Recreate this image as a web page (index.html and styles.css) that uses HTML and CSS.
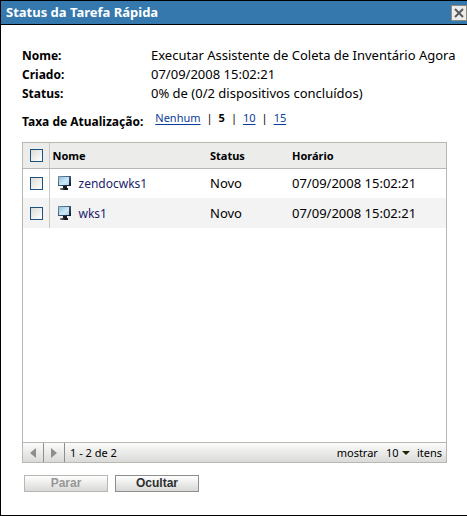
FILE: index.html
```html
<!DOCTYPE html>
<html lang="pt-BR">
<head>
    <meta charset="UTF-8">
    <meta name="viewport" content="width=device-width, initial-scale=1.0">
    <title>Status da Tarefa Rápida</title>
    <link rel="stylesheet" href="styles.css">
</head>
<body>
    <svg width="0" height="0" class="defs">
        <defs>
            <linearGradient id="screen" x1="0" y1="0" x2="1" y2="1">
                <stop offset="0" stop-color="#8fbfdc" />
                <stop offset="0.6" stop-color="#cfeaf8" />
                <stop offset="1" stop-color="#a5d3ec" />
            </linearGradient>
            <linearGradient id="frame" x1="0" y1="0" x2="1" y2="1">
                <stop offset="0" stop-color="#7f93a8" />
                <stop offset="0.5" stop-color="#3c5878" />
                <stop offset="1" stop-color="#0c1420" />
            </linearGradient>
            <linearGradient id="stand" x1="0" y1="0" x2="1" y2="0">
                <stop offset="0" stop-color="#8a94a0" />
                <stop offset="0.6" stop-color="#15181c" />
            </linearGradient>
            <symbol id="monitor" viewBox="0 0 13 14">
                <rect x="0" y="0" width="13" height="10" fill="url(#frame)" />
                <rect x="1" y="1" width="10" height="8" fill="url(#screen)" />
                <rect x="5" y="10" width="4" height="2" fill="#1a1d22" />
                <path d="M2 12h8v2h-8z" fill="url(#stand)" />
            </symbol>
        </defs>
    </svg>

    <div class="dialog">
        <header class="title-bar">
            <h1>Status da Tarefa Rápida</h1>
            <button type="button" class="close" aria-label="Fechar">
                <svg width="10" height="10" viewBox="0 0 10 10">
                    <path d="M1 1l8 8M9 1l-8 8" stroke="#5a5a5a" stroke-width="2" />
                </svg>
            </button>
        </header>

        <main class="content">
            <dl class="details">
                <dt>Nome:</dt>
                <dd>Executar Assistente de Coleta de Inventário Agora</dd>
                <dt>Criado:</dt>
                <dd>07/09/2008 15:02:21</dd>
                <dt>Status:</dt>
                <dd>0% de (0/2 dispositivos concluídos)</dd>
            </dl>

            <div class="refresh">
                <span class="refresh-label">Taxa de Atualização:</span>
                <nav class="rates">
                    <a href="#">Nenhum</a>
                    <span>|</span>
                    <b>5</b>
                    <span>|</span>
                    <a href="#">10</a>
                    <span>|</span>
                    <a href="#">15</a>
                </nav>
            </div>

            <section class="grid">
                <div class="grid-body">
                    <table>
                        <thead>
                            <tr>
                                <th class="check"><input type="checkbox" aria-label="Selecionar todos"></th>
                                <th class="name">Nome</th>
                                <th class="status">Status</th>
                                <th>Horário</th>
                            </tr>
                        </thead>
                        <tbody>
                            <tr>
                                <td class="check"><input type="checkbox" aria-label="zendocwks1"></td>
                                <td class="name">
                                    <div class="device">
                                        <svg width="13" height="14"><use href="#monitor" /></svg>
                                        <span>zendocwks1</span>
                                    </div>
                                </td>
                                <td class="status">Novo</td>
                                <td>07/09/2008 15:02:21</td>
                            </tr>
                            <tr>
                                <td class="check"><input type="checkbox" aria-label="wks1"></td>
                                <td class="name">
                                    <div class="device">
                                        <svg width="13" height="14"><use href="#monitor" /></svg>
                                        <span>wks1</span>
                                    </div>
                                </td>
                                <td class="status">Novo</td>
                                <td>07/09/2008 15:02:21</td>
                            </tr>
                        </tbody>
                    </table>
                </div>

                <footer class="pager">
                    <button type="button" class="page" aria-label="Anterior">
                        <svg width="6" height="10" viewBox="0 0 6 10"><path d="M6 0v10l-6-5z" fill="#8c8f8c" /></svg>
                    </button>
                    <button type="button" class="page" aria-label="Próxima">
                        <svg width="6" height="10" viewBox="0 0 6 10"><path d="M0 0v10l6-5z" fill="#8c8f8c" /></svg>
                    </button>
                    <span class="range">1 - 2 de 2</span>
                    <label for="pageSize">mostrar</label>
                    <span class="size">
                        <select id="pageSize">
                            <option>10</option>
                            <option>25</option>
                            <option>50</option>
                        </select>
                        <svg width="8" height="4" viewBox="0 0 8 4"><path d="M0 0h8l-4 4z" fill="#222200" /></svg>
                    </span>
                    <span>itens</span>
                </footer>
            </section>

            <div class="actions">
                <button type="button" disabled>Parar</button>
                <button type="button">Ocultar</button>
            </div>
        </main>
    </div>
</body>
</html>
```

FILE: styles.css
```css
* {
    box-sizing: border-box;
}

body {
    margin: 0;
    background: #fff;
    color: #000;
    font: 12px/19px "Noto Sans", "Open Sans", sans-serif;
}

.defs {
    position: absolute;
}

.dialog {
    display: flex;
    flex-direction: column;
    min-height: 100vh;
    border: 1px solid #000;
    border-right: 0;
}

.title-bar {
    display: flex;
    align-items: center;
    justify-content: space-between;
    height: 24px;
    padding-left: 5px;
    background: #3578ae;
    border-bottom: 1px solid #000;
}

.title-bar h1 {
    margin: 0;
    color: #fff;
    font-size: 13px;
}

.close {
    display: flex;
    align-items: center;
    justify-content: center;
    width: 16px;
    height: 16px;
    padding: 0;
    background: #ececec;
    border: 1px solid #8c8c84;
}

.content {
    display: flex;
    flex: 1;
    flex-direction: column;
    padding: 21px 20px 23px 21px;
}

.details {
    display: grid;
    grid-template-columns: 129px 1fr;
    margin: 0;
    white-space: nowrap;
}

.details dt,
.refresh-label {
    font-weight: bold;
}

.details dd {
    margin: 0;
    font-size: 13px;
}

.refresh {
    display: flex;
    gap: 12px;
    margin: 5px 0 11px;
}

.refresh-label {
    padding-top: 4px;
}

.rates {
    display: flex;
    gap: 6px;
    font-size: 11px;
}

.rates a {
    color: #0a3c9c;
    text-underline-offset: 2px;
}

.grid {
    display: flex;
    flex: 1;
    flex-direction: column;
    border: 1px solid #b8b8b2;
}

.grid-body {
    flex: 1;
}

table {
    width: 100%;
    border-collapse: collapse;
    table-layout: fixed;
}

th,
td {
    height: 30px;
    padding: 0;
    text-align: left;
}

th {
    height: 25px;
    background: #ececea;
    border-bottom: 1px solid #b8b8b2;
    font-size: 11px;
}

td {
    font-size: 13px;
}

tbody tr:nth-child(even) {
    background: #f3f3f3;
}

.check {
    width: 26px;
    padding-left: 7px;
    border-right: 1px solid #c8c8c4;
}

.name {
    width: 161px;
    padding-left: 3px;
}

.status {
    width: 82px;
}

input[type="checkbox"] {
    display: block;
    width: 13px;
    height: 13px;
    margin: 0;
    appearance: none;
    background: linear-gradient(135deg, #dcdcd6, #fff);
    border: 1px solid #1c5180;
}

.device {
    display: flex;
    align-items: center;
    gap: 8px;
    padding-left: 5px;
    color: #1c1c6c;
    font-size: 12px;
}

.pager {
    display: flex;
    align-items: center;
    height: 20px;
    padding-right: 4px;
    background: linear-gradient(#fbfbfb, #dadad8);
    border-top: 1px solid #b8b8b2;
    font-size: 11px;
}

.page {
    display: flex;
    align-items: center;
    justify-content: center;
    width: 21px;
    height: 19px;
    padding: 0;
    background: none;
    border: 0;
    border-right: 1px solid #8c8f8c;
}

.range {
    margin: 0 auto 0 5px;
}

.size {
    display: flex;
    align-items: center;
    gap: 3px;
    margin: 0 7px 0 8px;
}

.size select {
    padding: 0;
    appearance: none;
    background: none;
    border: 0;
    color: inherit;
    font: inherit;
}

.actions {
    display: flex;
    gap: 7px;
    margin: 12px 0 0 2px;
}

.actions button {
    width: 84px;
    height: 17px;
    padding: 0;
    background: linear-gradient(#fff, #d8d8d6);
    border: 1px solid #8c8f8c;
    color: #2c3030;
    font: bold 12px/15px "Liberation Sans", Arial, sans-serif;
}

.actions button:disabled {
    border-color: #b8b8b2;
    color: #989898;
}
```
